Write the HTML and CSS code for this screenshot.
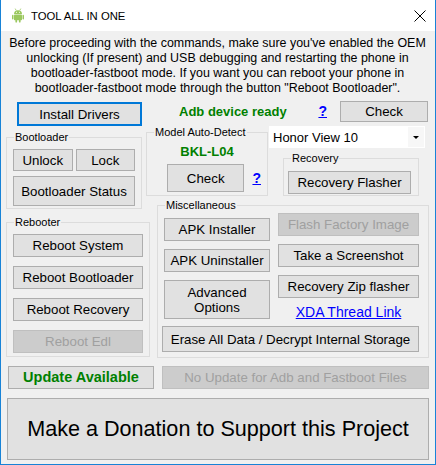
FILE: index.html
```html
<!DOCTYPE html>
<html lang="en">
<head>
    <meta charset="UTF-8">
    <meta name="viewport" content="width=device-width, initial-scale=1.0">
    <title>TOOL ALL IN ONE</title>
    <link rel="stylesheet" href="styles.css">
</head>
<body>
    <div class="window">
        <div class="titlebar">
            <svg class="app-icon" width="12" height="15" viewBox="0 0 12 15">
                <line x1="3.2" y1="0.6" x2="4.2" y2="2.4" stroke="#9bc85f" stroke-width="0.8"/>
                <line x1="8.8" y1="0.6" x2="7.8" y2="2.4" stroke="#9bc85f" stroke-width="0.8"/>
                <path d="M2 6 A4 3.8 0 0 1 10 6 Z" fill="#9bc85f"/>
                <circle cx="4.5" cy="4.2" r="0.55" fill="#fff"/>
                <circle cx="7.5" cy="4.2" r="0.55" fill="#fff"/>
                <rect x="2" y="6.6" width="8" height="5.6" rx="0.8" fill="#9bc85f"/>
                <rect x="0" y="6.8" width="1.5" height="4.6" rx="0.75" fill="#9bc85f"/>
                <rect x="10.5" y="6.8" width="1.5" height="4.6" rx="0.75" fill="#9bc85f"/>
                <rect x="3.4" y="11" width="1.7" height="3.6" rx="0.85" fill="#9bc85f"/>
                <rect x="6.9" y="11" width="1.7" height="3.6" rx="0.85" fill="#9bc85f"/>
            </svg>
            <span class="title">TOOL ALL IN ONE</span>
            <svg class="close-icon" width="12" height="12" viewBox="0 0 12 12">
                <path d="M0.5 0.5 L11.5 11.5 M11.5 0.5 L0.5 11.5" stroke="#000" stroke-width="1" fill="none"/>
            </svg>
        </div>

        <div class="client">
            <p class="notice">
                Before proceeding with the commands, make sure you've enabled the OEM<br>
                unlocking (If present) and USB debugging and restarting the phone in<br>
                bootloader-fastboot mode. If you want you can reboot your phone in<br>
                bootloader-fastboot mode through the button "Reboot Bootloader".
            </p>

            <div class="panel">
                <div class="col-left">
                    <button class="btn btn-focus btn-drivers">Install Drivers</button>

                    <fieldset class="group group-bootloader">
                        <legend>Bootloader</legend>
                        <div class="btn-row">
                            <button class="btn btn-small">Unlock</button>
                            <button class="btn btn-small">Lock</button>
                        </div>
                        <button class="btn btn-bl-status">Bootloader Status</button>
                    </fieldset>

                    <fieldset class="group group-rebooter">
                        <legend>Rebooter</legend>
                        <div class="btn-stack">
                            <button class="btn btn-reboot">Reboot System</button>
                            <button class="btn btn-reboot">Reboot Bootloader</button>
                            <button class="btn btn-reboot">Reboot Recovery</button>
                            <button class="btn btn-reboot" disabled>Reboot Edl</button>
                        </div>
                    </fieldset>
                </div>

                <div class="col-right">
                    <div class="adb-row">
                        <span class="status-ok adb-status">Adb device ready</span>
                        <a class="help-link adb-help">?</a>
                        <button class="btn btn-adb-check">Check</button>
                    </div>

                    <div class="detect-row">
                        <fieldset class="group group-model">
                            <legend>Model Auto-Detect</legend>
                            <div class="status-ok model-name">BKL-L04</div>
                            <div class="model-actions">
                                <button class="btn btn-model-check">Check</button>
                                <a class="help-link">?</a>
                            </div>
                        </fieldset>

                        <div class="device-col">
                            <div class="combo">
                                <span class="combo-value">Honor View 10</span>
                                <span class="combo-arrow"></span>
                            </div>
                            <fieldset class="group group-recovery">
                                <legend>Recovery</legend>
                                <button class="btn btn-recovery">Recovery Flasher</button>
                            </fieldset>
                        </div>
                    </div>

                    <fieldset class="group group-misc">
                        <legend>Miscellaneous</legend>
                        <div class="misc-cols">
                            <div class="misc-left">
                                <button class="btn btn-misc-l">APK Installer</button>
                                <button class="btn btn-misc-l">APK Uninstaller</button>
                                <button class="btn btn-misc-l btn-tall">Advanced<br>Options</button>
                            </div>
                            <div class="misc-right">
                                <button class="btn btn-misc-r" disabled>Flash Factory Image</button>
                                <button class="btn btn-misc-r">Take a Screenshot</button>
                                <button class="btn btn-misc-r">Recovery Zip flasher</button>
                                <a class="xda-link">XDA Thread Link</a>
                            </div>
                        </div>
                        <button class="btn btn-erase">Erase All Data / Decrypt Internal Storage</button>
                    </fieldset>
                </div>
            </div>

            <div class="update-row">
                <button class="btn btn-update">Update Available</button>
                <button class="btn btn-no-update" disabled>No Update for Adb and Fastboot Files</button>
            </div>

            <button class="btn btn-donate">Make a Donation to Support this Project</button>
        </div>
    </div>
</body>
</html>
```

FILE: styles.css
```css
:root {
    --window-border: #1883d7;
    --client-bg: #f0f0f0;
    --btn-bg: #e1e1e1;
    --btn-border: #adadad;
    --group-border: #dcdcdc;
    --disabled-bg: #cccccc;
    --disabled-border: #bfbfbf;
    --disabled-text: #a0a0a0;
    --ok-green: #008000;
    --link-blue: #0000ff;
    --focus-blue: #0078d7;
}

* {
    box-sizing: border-box;
}

body {
    margin: 0;
    font-family: "Liberation Sans", Arial, sans-serif;
    font-size: 13px;
    color: #000;
}

.window {
    width: 436px;
    height: 465px;
    border: 1px solid var(--window-border);
    border-top: none;
    background: var(--client-bg);
    display: flex;
    flex-direction: column;
}

/* title bar */
.titlebar {
    height: 31px;
    flex-shrink: 0;
    background: #fff;
    display: flex;
    align-items: center;
}

.app-icon {
    margin-left: 11px;
}

.title {
    margin-left: 7px;
    font-size: 11.3px;
}

.close-icon {
    margin-left: auto;
    margin-right: 9px;
}

/* client area */
.client {
    flex: 1;
    padding: 0 6px 0 5px;
}

.notice {
    margin: 5px 0 4px;
    font-size: 12.45px;
    line-height: 15px;
    text-align: center;
    white-space: nowrap;
}

/* buttons */
.btn {
    display: block;
    margin: 0;
    padding: 0;
    font: inherit;
    font-size: 13.3px;
    line-height: 15px;
    color: #000;
    background: var(--btn-bg);
    border: 1px solid var(--btn-border);
    border-radius: 0;
    text-align: center;
    white-space: nowrap;
}

.btn:disabled {
    background: var(--disabled-bg);
    border-color: var(--disabled-border);
    color: var(--disabled-text);
}

.btn-focus {
    border: 2px solid var(--focus-blue);
}

/* group boxes */
.group {
    margin: 0;
    padding: 0 6px;
    min-width: 0;
    border: 1px solid var(--group-border);
}

.group legend {
    margin-left: 1px;
    padding: 0 1px;
    font-size: 11px;
    line-height: 13px;
}

.panel {
    display: flex;
    align-items: flex-start;
}

/* left column */
.col-left {
    width: 144px;
    flex-shrink: 0;
}

.btn-drivers {
    margin: 2px 0 0 11px;
    width: 125px;
    height: 24px;
}

.group-bootloader {
    width: 136px;
    margin-top: 5px;
    padding-top: 5px;
    padding-bottom: 2px;
}

.btn-row {
    display: flex;
    gap: 3px;
}

.btn-small {
    width: 60px;
    height: 22px;
}

.btn-bl-status {
    margin-top: 5px;
    width: 122px;
    height: 30px;
}

.group-rebooter {
    width: 144px;
    margin-top: 7px;
    padding-top: 5px;
    padding-bottom: 3px;
}

.btn-stack {
    display: flex;
    flex-direction: column;
    gap: 9px;
}

.btn-reboot {
    width: 130px;
    height: 23px;
}

/* right column */
.col-right {
    width: 283px;
    flex-shrink: 0;
    margin-left: -4px;
}

.adb-row {
    height: 22px;
    display: flex;
    align-items: center;
}

.status-ok {
    color: var(--ok-green);
    font-weight: bold;
}

.adb-status {
    margin-left: 33px;
}

.help-link {
    color: var(--link-blue);
    font-weight: bold;
    text-decoration: underline;
    font-size: 14px;
}

.adb-help {
    margin-left: auto;
    margin-right: 13px;
}

.btn-adb-check {
    width: 88px;
    height: 21px;
    margin: 1px 1px 0 0;
}

.detect-row {
    display: flex;
    align-items: flex-start;
}

.group-model {
    width: 122px;
    margin-top: 4px;
    padding-top: 5px;
    padding-bottom: 3px;
}

.model-name {
    text-align: center;
    line-height: 15px;
}

.model-actions {
    display: flex;
    align-items: center;
    gap: 8px;
    margin: 5px 0 0 14px;
}

.btn-model-check {
    width: 79px;
    height: 28px;
}

.device-col {
    width: 156px;
    margin-left: 1px;
}

.combo {
    margin-top: 4px;
    height: 22px;
    background: #fff;
    display: flex;
    align-items: center;
}

.combo-value {
    padding-left: 4px;
}

.combo-arrow {
    margin-left: auto;
    width: 16px;
    height: 20px;
    margin-right: 1px;
    background: #f7f7f7;
    position: relative;
}

.combo-arrow::after {
    content: '';
    position: absolute;
    left: 5px;
    top: 9px;
    border-left: 3px solid transparent;
    border-right: 3px solid transparent;
    border-top: 3px solid #000;
}

.group-recovery {
    width: 136px;
    margin: 4px 0 0 14px;
    padding: 6px 4px 1px;
}

.group-recovery legend {
    margin-left: 3px;
}

.btn-recovery {
    width: 123px;
    height: 23px;
}

.group-misc {
    width: 272px;
    margin: 3px 0 0 11px;
    padding-top: 0;
    padding-bottom: 5px;
}

.misc-cols {
    display: flex;
    align-items: flex-start;
    gap: 8px;
}

.misc-left,
.misc-right {
    display: flex;
    flex-direction: column;
    gap: 8px;
}

.misc-left {
    margin-top: 6px;
}

.misc-right {
    margin-top: 1px;
}

.btn-misc-l {
    width: 106px;
    height: 23px;
}

.btn-tall {
    height: 39px;
}

.btn-misc-r {
    width: 141px;
    height: 23px;
}

.xda-link {
    margin-top: -1px;
    text-align: center;
    color: var(--link-blue);
    text-decoration: underline;
    font-size: 14px;
    line-height: 15px;
}

.btn-erase {
    margin: 6px 0 0 -2px;
    width: 257px;
    height: 26px;
}

/* bottom */
.update-row {
    display: flex;
    margin-top: 8px;
}

.btn-update {
    margin-left: 2px;
    width: 146px;
    height: 23px;
    color: var(--ok-green);
    font-weight: bold;
    font-size: 14.5px;
}

.btn-no-update {
    margin-left: 8px;
    width: 267px;
    height: 23px;
}

.btn-donate {
    margin: 9px 0 0 1px;
    width: 422px;
    height: 62px;
    font-size: 21.6px;
    line-height: 24px;
}
```
